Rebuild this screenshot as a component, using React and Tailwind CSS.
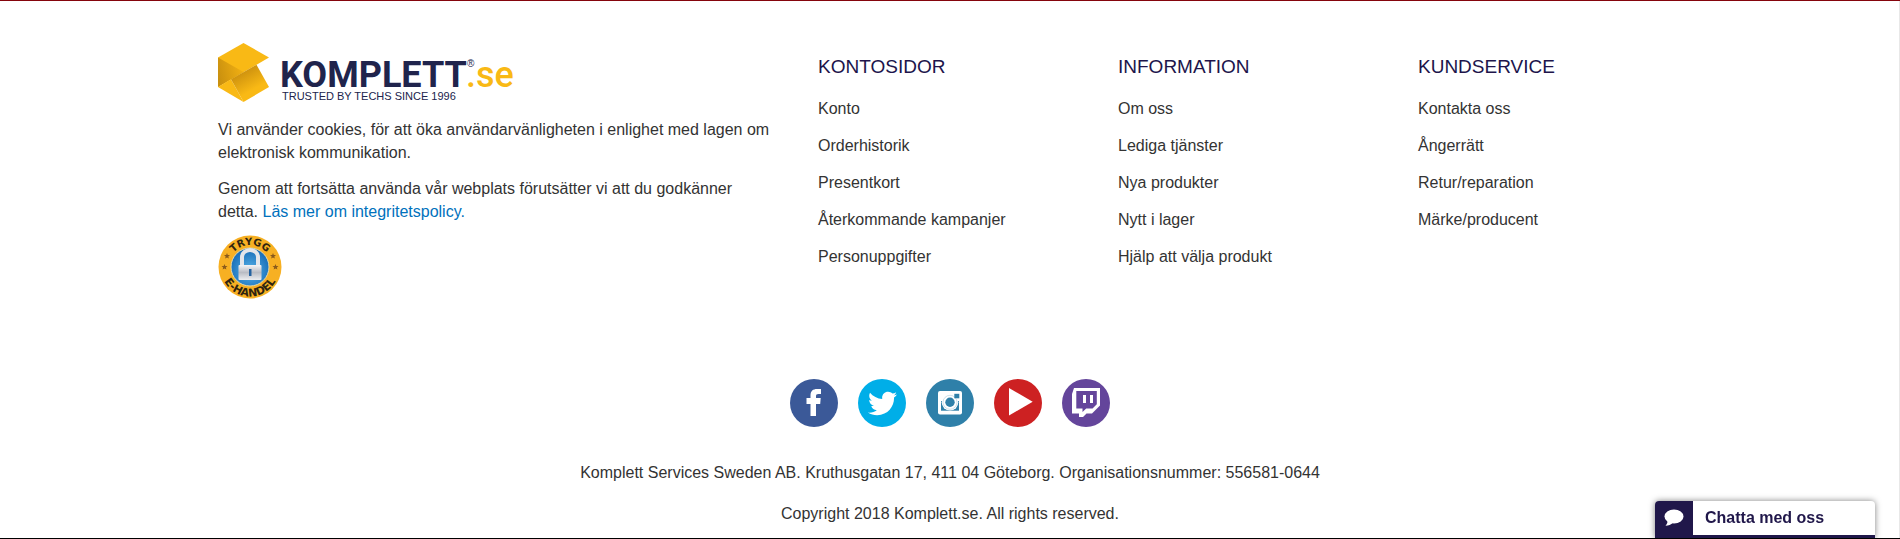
import React from "react";
import { FaTwitter } from "react-icons/fa";

const columns = [
  { title: "KONTOSIDOR", links: ["Konto", "Orderhistorik", "Presentkort", "Återkommande kampanjer", "Personuppgifter"] },
  { title: "INFORMATION", links: ["Om oss", "Lediga tjänster", "Nya produkter", "Nytt i lager", "Hjälp att välja produkt"] },
  { title: "KUNDSERVICE", links: ["Kontakta oss", "Ångerrätt", "Retur/reparation", "Märke/producent"] },
];

function Logo() {
  return (
    <svg viewBox="0 0 300 60" className="mb-[3px] h-15 w-75" role="img" aria-label="Komplett.se">
      <defs>
        <linearGradient id="fold" gradientUnits="userSpaceOnUse" x1="0" y1="34" x2="24" y2="28">
          <stop offset="0" stopColor="#c9900f" />
          <stop offset="1" stopColor="#efae12" />
        </linearGradient>
        <linearGradient id="under" gradientUnits="userSpaceOnUse" x1="22" y1="29" x2="34" y2="50">
          <stop offset="0" stopColor="#cc900e" />
          <stop offset="0.9" stopColor="#f9b915" />
        </linearGradient>
      </defs>
      <path d="M0 14.500 25.500 0 51 14.500 0 44z" fill="#f9b915" />
      <path d="M0 14.500 25.500 29 0 44z" fill="url(#fold)" />
      <path d="M0 44 13 36.300 25.500 59z" fill="#f9b915" />
      <path d="M13 36.300 38.500 21.800 51 44 25.500 59z" fill="url(#under)" />
      <text x="62" y="44" fontFamily="Roboto, sans-serif" fontWeight="700" fontSize="36" fill="#20244c">KOMPLETT</text>
      <text x="249" y="24" fontFamily="Liberation Sans, sans-serif" fontSize="10" fill="#20244c">®</text>
      <text x="248" y="44" fontFamily="Roboto, sans-serif" fontWeight="500" fontSize="36" fill="#f9b915">.se</text>
      <text x="64" y="57" fontFamily="Liberation Sans, sans-serif" fontSize="11" fill="#20244c">TRUSTED BY TECHS SINCE 1996</text>
    </svg>
  );
}

const STAR = "M0 -3 .8 -1 3 -.9 1.300 .5 1.900 2.600 0 1.400 -1.900 2.600 -1.300 .5 -3 -.9 -.8 -1z";

function Badge() {
  return (
    <svg viewBox="0 0 64 64" className="size-16" role="img" aria-label="Trygg E-handel">
      <defs>
        <radialGradient id="blue" cx="0.5" cy="0.6" r="0.6">
          <stop offset="0" stopColor="#59b4ea" />
          <stop offset="1" stopColor="#1368b4" />
        </radialGradient>
        <linearGradient id="steel" x1="0" y1="0" x2="0" y2="1">
          <stop offset="0" stopColor="#f4f4f6" />
          <stop offset="0.5" stopColor="#b9bcc4" />
          <stop offset="1" stopColor="#eceef1" />
        </linearGradient>
        <path id="upper" d="M10 32a22 22 0 0 1 44 0" />
        <path id="lower" d="M2.500 32a29.500 29.500 0 0 0 59 0" />
      </defs>
      <circle cx="32" cy="32" r="31.500" fill="#f7b023" />
      <circle cx="32" cy="32" r="19" fill="url(#blue)" stroke="#e8d9a8" strokeWidth="1" />
      <path d="M24 31v-9a8 7 0 0 1 16 0v9" fill="none" stroke="#e4e6ea" strokeWidth="4" />
      <rect x="20.500" y="30" width="23" height="15" rx="1" fill="url(#steel)" />
      <path d="M31 34h2.500v7H31z" fill="#2462a0" />
      <path d={STAR} transform="translate(9 21)" fill="#8a5a1c" />
      <path d={STAR} transform="translate(6.500 32)" fill="#8a5a1c" />
      <path d={STAR} transform="translate(55 21)" fill="#8a5a1c" />
      <path d={STAR} transform="translate(57.500 32)" fill="#8a5a1c" />
      <g fontFamily="DejaVu Sans, sans-serif" fontWeight="700" fontSize="11" fill="#2f2410" textAnchor="middle">
        <text fontSize="10"><textPath href="#upper" startOffset="50%">TRYGG</textPath></text>
        <text><textPath href="#lower" startOffset="50%">E-HANDEL</textPath></text>
      </g>
    </svg>
  );
}

const FacebookIcon = () => (
  <svg viewBox="0 0 48 48" className="size-12">
    <path d="M20.500 37V25h-4v-6h4v-2.500c0-4.500 2.500-6.500 6.500-6.500h4v5h-2.500c-2 0-2.500.8-2.500 2.300V19h4.700l-.5 6H26v12z" fill="#fff" />
  </svg>
);

const InstagramIcon = () => (
  <svg viewBox="0 0 48 48" className="size-12">
    <rect x="12" y="12" width="24" height="23.500" rx="2" fill="#fff" />
    <path d="M15 22h18v9.700H15z" fill="#2f80a9" />
    <circle cx="24" cy="23.300" r="8.300" fill="#fff" />
    <circle cx="24" cy="23.300" r="7" fill="none" stroke="#2f80a9" strokeWidth="0.6" opacity="0.4" />
    <circle cx="24" cy="23.300" r="4.700" fill="#2f80a9" />
    <rect x="28.300" y="14.800" width="5" height="4.500" fill="#2f80a9" />
  </svg>
);

const PlayIcon = () => (
  <svg viewBox="0 0 48 48" className="size-12">
    <path d="M15 9v27.500L38.700 22.700z" fill="#fff" />
  </svg>
);

const TwitchIcon = () => (
  <svg viewBox="0 0 48 48" className="size-12">
    <path d="M12 9h26v17.500l-8 8h-5.500L21 38h-4v-3.500h-7V15z" fill="#fff" />
    <path d="M14.300 12h20.500v13.300l-4.300 4.200h-6.300L20.500 33v-3.500h-6.200z" fill="#64459b" />
    <path d="M21 16h3v8h-3zM28 16h3v8h-3z" fill="#fff" />
  </svg>
);

const social = [
  { name: "Facebook", className: "bg-[#3b5998]", icon: <FacebookIcon /> },
  { name: "Twitter", className: "bg-[#00aee8]", icon: <FaTwitter size={29} /> },
  { name: "Instagram", className: "bg-[#2f80a9]", icon: <InstagramIcon /> },
  { name: "YouTube", className: "bg-[#cd2122]", icon: <PlayIcon /> },
  { name: "Twitch", className: "bg-[#64459b]", icon: <TwitchIcon /> },
];

export default function App() {
  return (
    <div className="bg-white font-['Liberation_Sans',Arial,sans-serif] text-base text-[#333] shadow-[inset_-1px_0_#e8e8e8]">
      <footer className="border-t border-b border-t-[#85040c] border-b-black pb-[13px]">
        <div className="mx-auto grid max-w-375 grid-cols-[2fr_1fr_1fr_1fr] pt-10.5">
          <section className="flex flex-col items-start gap-3 px-4.5 leading-[23px]">
            <Logo />
            <div className="flex max-w-[555px] flex-col gap-[13px]">
              <p>Vi använder cookies, för att öka användarvänligheten i enlighet med lagen om elektronisk kommunikation.</p>
              <p>
                Genom att fortsätta använda vår webplats förutsätter vi att du godkänner detta.{" "}
                <a href="#integritetspolicy" className="text-[#0071bc]">Läs mer om integritetspolicy.</a>
              </p>
            </div>
            <Badge />
          </section>
          {columns.map((c) => (
            <nav key={c.title} aria-label={c.title} className="px-4.5 pt-3">
              <h2 className="text-[19px] leading-6 text-[#20144b]">{c.title}</h2>
              <ul className="mt-4.5 flex flex-col gap-3.5 leading-[23px]">
                {c.links.map((l) => (
                  <li key={l}><a href="#lank">{l}</a></li>
                ))}
              </ul>
            </nav>
          ))}
        </div>

        <ul className="mt-20 flex justify-center gap-5">
          {social.map((s) => (
            <li key={s.name}>
              <a href="#social" aria-label={s.name} className={`flex size-12 items-center justify-center rounded-full text-white ${s.className}`}>
                {s.icon}
              </a>
            </li>
          ))}
        </ul>

        <div className="mt-8.5 flex flex-col items-center gap-4.5 leading-[23px]">
          <p>Komplett Services Sweden AB. Kruthusgatan 17, 411 04 Göteborg. Organisationsnummer: 556581-0644</p>
          <p>Copyright 2018 Komplett.se. All rights reserved.</p>
        </div>
      </footer>

      <button
        type="button"
        className="fixed right-[25px] bottom-px flex w-55 items-stretch overflow-hidden rounded-t border-b-3 border-[#20174a] bg-white text-left font-bold text-[#20174a] shadow-[0_0_6px_rgba(0,0,0,0.5)]"
      >
        <span className="flex w-9.5 items-center justify-center bg-[#20174a] text-white">
          <svg viewBox="0 0 20 18" className="h-4.5 w-5">
            <ellipse cx="10" cy="7.500" rx="9.500" ry="7" fill="#fff" />
            <path d="M3.500 11.500c.2 2-.5 3.800-2 5.200 3 0 5.500-1 7.500-3z" fill="#fff" />
          </svg>
        </span>
        <span className="px-3 py-1.5 leading-[22px]">Chatta med oss</span>
      </button>
    </div>
  );
}
